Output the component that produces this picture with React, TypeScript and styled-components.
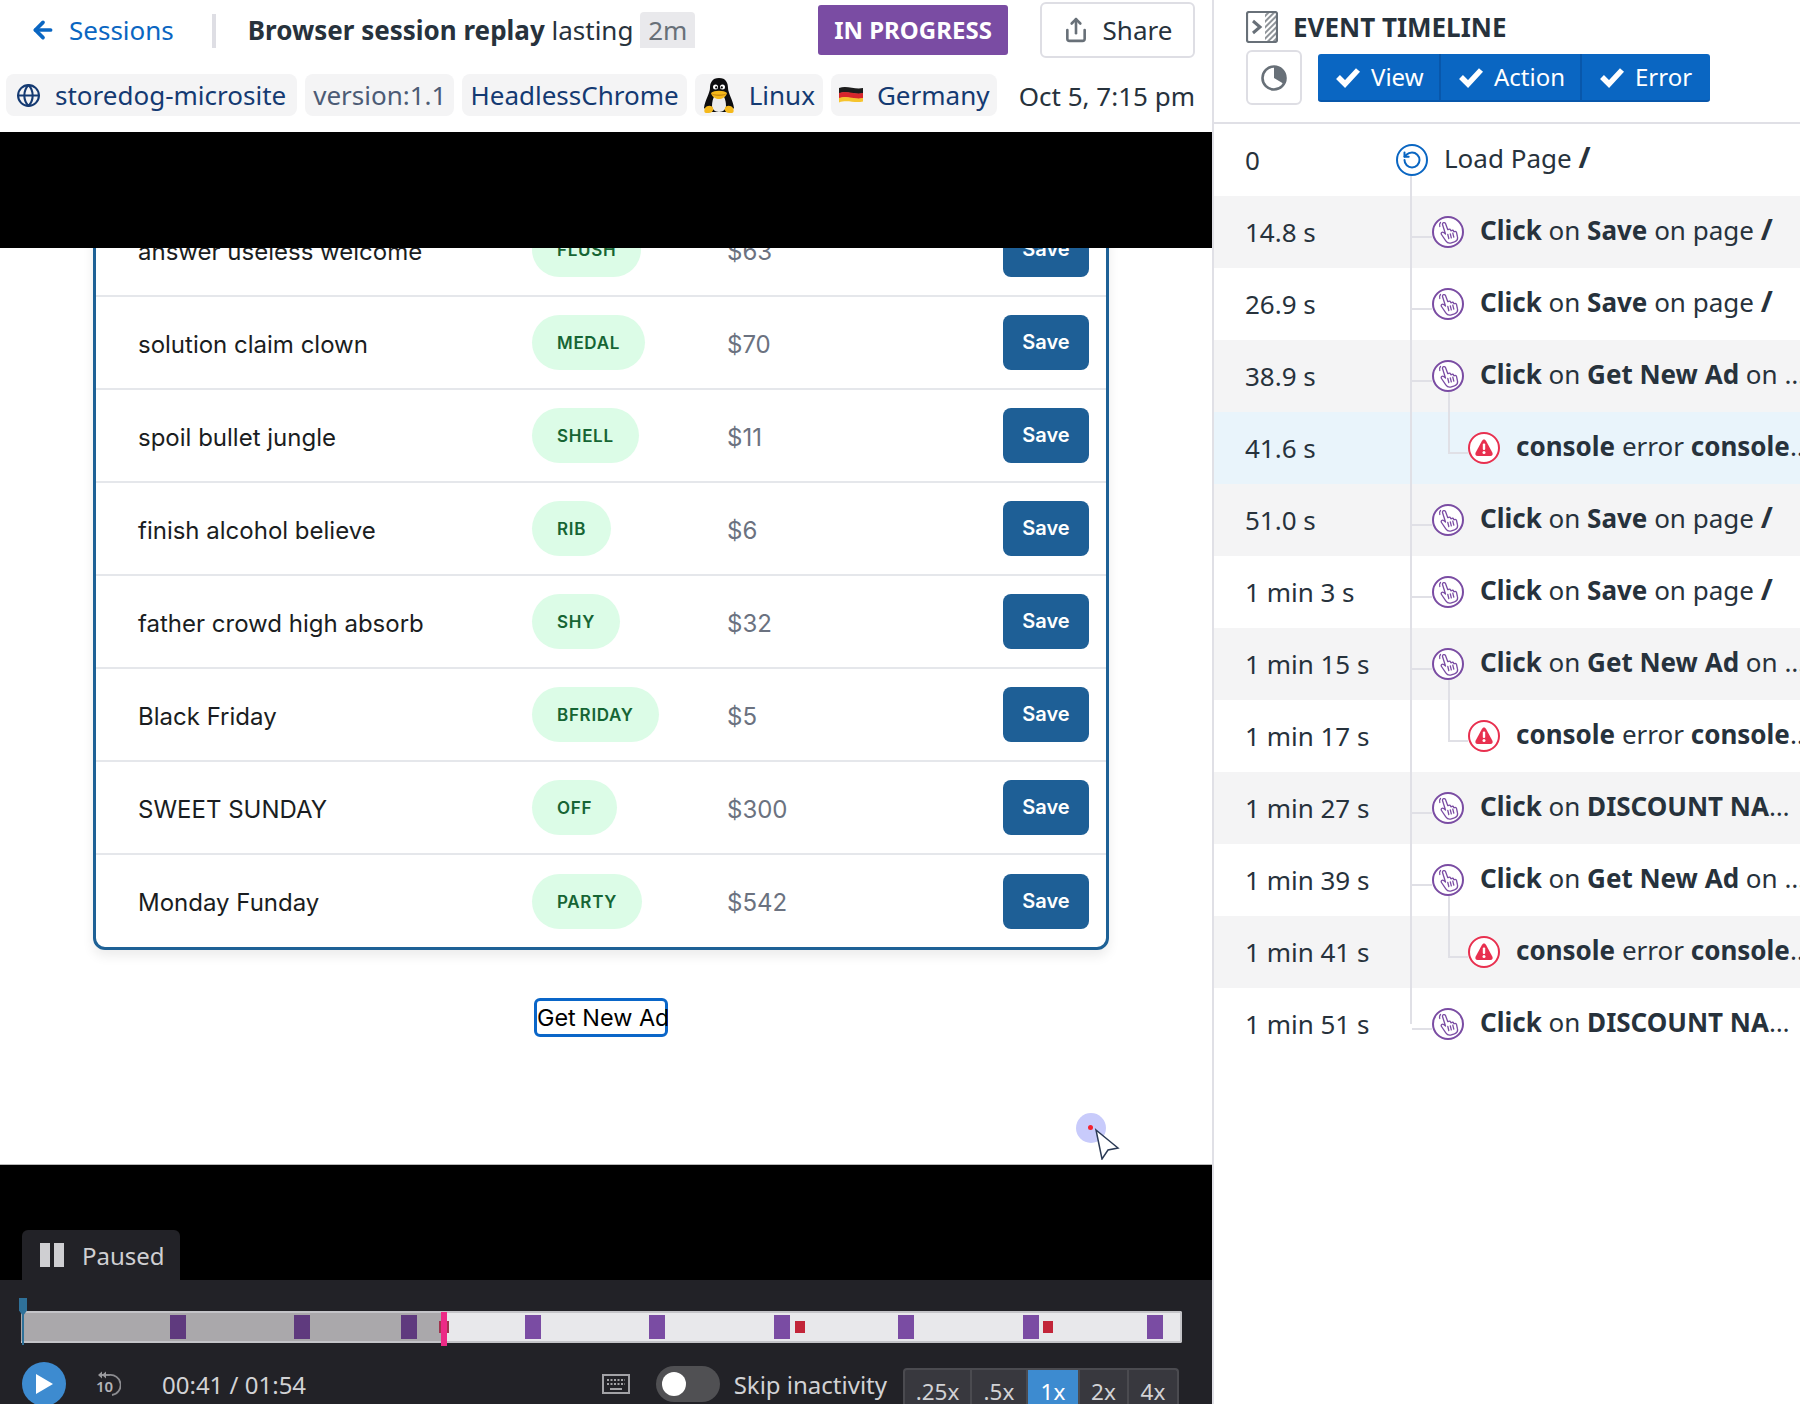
import React from "react";
import styled, { createGlobalStyle } from "styled-components";
import { ArrowLeft, Globe, RotateCcw, Share } from "lucide-react";

const GlobalStyle = createGlobalStyle`
  html, body { margin: 0; padding: 0; background: #fff; }
  * { box-sizing: border-box; }
`;

const Page = styled.div`
  display: flex;
  width: 1800px;
  height: 1404px;
  overflow: hidden;
  font-family: "Noto Sans", sans-serif;
  color: #27323c;
`;

const ReplayPanel = styled.div`
  display: flex;
  flex-direction: column;
  width: 1212px;
  flex: none;
`;

const Header = styled.header`
  height: 132px;
  flex: none;
`;

const TopRow = styled.div`
  display: flex;
  align-items: center;
  height: 60px;
  padding: 0 17px 0 30px;
`;

const BackLink = styled.a`
  display: flex;
  align-items: center;
  gap: 13px;
  font-size: 26px;
  color: #0a66c2;
`;

const TitleDivider = styled.span`
  width: 4px;
  height: 34px;
  margin: 2px 32px 0 38px;
  background: #dedee4;
`;

const Title = styled.div`
  font-size: 26px;
  white-space: nowrap;
  b { font-weight: 700; }
`;

const Duration = styled.span`
  display: inline-block;
  margin-left: 0;
  padding: 0 8px;
  line-height: 36px;
  border-radius: 4px 4px 0 0;
  background: #e9e9ec;
  color: #687078;
`;

const StatusBadge = styled.div`
  margin-left: auto;
  width: 190px;
  height: 50px;
  border-radius: 3px;
  background: #7a4ca3;
  color: #fff;
  font-size: 24px;
  font-weight: 700;
  line-height: 50px;
  text-align: center;
  white-space: nowrap;
`;

const ShareButton = styled.div`
  display: flex;
  align-items: center;
  justify-content: center;
  gap: 14px;
  width: 155px;
  height: 56px;
  margin-left: 32px;
  border: 2px solid #dedee4;
  border-radius: 6px;
  font-size: 26px;
  svg { color: #687078; }
`;

const ChipRow = styled.div`
  display: flex;
  align-items: center;
  gap: 8px;
  height: 42px;
  margin-top: 14px;
  padding: 0 17px 0 6px;
`;

const Chip = styled.div`
  display: flex;
  align-items: center;
  gap: 14px;
  height: 42px;
  padding: 0 8px;
  border-radius: 8px;
  background: #f4f4f5;
  color: #143a72;
  font-size: 26px;
  line-height: 38px;
  white-space: nowrap;
`;

const ServiceChip = styled(Chip)`
  padding: 0 11px 0 10px;
`;

const VersionChip = styled(Chip)`
  gap: 0;
  color: #4c5b75;
`;

const SessionDate = styled.div`
  margin-left: auto;
  font-size: 26px;
  padding-top: 2px;
  white-space: nowrap;
`;

const BlackBand = styled.div`
  height: 116px;
  flex: none;
  background: #000;
`;

const Viewport = styled.div`
  position: relative;
  height: 917px;
  flex: none;
  overflow: hidden;
  background: #fff;
  border-bottom: 1px solid #b9b9b9;
`;

const Card = styled.div`
  width: 1016px;
  margin: -47px 0 0 93px;
  border: 3px solid #1e6196;
  border-radius: 12px;
  box-shadow: 0 6px 12px rgba(0, 0, 0, 0.08);
`;

const CouponRow = styled.div`
  display: grid;
  grid-template-columns: 394px 195px 1fr auto;
  align-items: center;
  height: 93px;
  padding: 0 17px 0 42px;
  border-bottom: 2px solid #e5e7eb;
  font-family: Inter, sans-serif;
  &:last-child { height: 92px; border-bottom: 0; }
`;

const CouponName = styled.div`
  padding-top: 3px;
  font-size: 24px;
  color: #1a1d21;
`;

const CouponCode = styled.div`
  justify-self: start;
  height: 55px;
  padding: 0 25px;
  border-radius: 28px;
  background: #dcfce7;
  color: #166534;
  font-size: 17px;
  font-weight: 600;
  letter-spacing: 0.7px;
  line-height: 56px;
`;

const CouponPrice = styled.div`
  padding-top: 3px;
  font-size: 24px;
  color: #6b7280;
`;

const SaveButton = styled.div`
  width: 86px;
  height: 55px;
  border-radius: 8px;
  background: #1e5f96;
  color: #fff;
  font-size: 20px;
  font-weight: 600;
  line-height: 55px;
  text-align: center;
`;

const AdButton = styled.div`
  width: 134px;
  height: 39px;
  margin: 48px 0 0 534px;
  border: 3px solid #0a66c8;
  border-radius: 6px;
  color: #000;
  font-family: Inter, sans-serif;
  font-size: 23.4px;
  line-height: 33px;
  text-align: center;
  white-space: nowrap;
`;

const CursorDot = styled.div`
  position: absolute;
  left: 1076px;
  top: 865px;
  width: 30px;
  height: 30px;
  border-radius: 50%;
  background: #c8cbfb;
  &::after {
    content: "";
    position: absolute;
    left: 12px;
    top: 12px;
    width: 5px;
    height: 5px;
    border-radius: 50%;
    background: #f5212f;
  }
`;

const CursorArrow = styled.svg`
  position: absolute;
  left: 1094px;
  top: 880px;
`;

const PausedBand = styled.div`
  display: flex;
  align-items: flex-end;
  height: 115px;
  flex: none;
  padding-left: 22px;
  background: #000;
`;

const PausedTab = styled.div`
  display: flex;
  align-items: center;
  gap: 18px;
  width: 158px;
  height: 50px;
  padding-left: 18px;
  border-radius: 6px 6px 0 0;
  background: #222227;
  color: #cfcfd2;
  font-size: 24px;
`;

const PauseBars = styled.span`
  display: flex;
  gap: 4px;
  i { width: 10px; height: 24px; background: #cfcfd2; }
`;

const Controls = styled.div`
  flex: 1;
  overflow: hidden;
  padding-top: 31px;
  background: #222227;
`;

const Track = styled.div`
  position: relative;
  width: 1161px;
  height: 32px;
  margin-left: 21px;
  border: 2px solid #c4c4c8;
  border-left: 0;
  border-radius: 0 2px 2px 0;
  background: #e8e8eb;
`;

const TrackPlayed = styled.div`
  position: absolute;
  left: 0;
  top: -2px;
  bottom: -2px;
  background: #aaa8ab;
  border-top: 2px solid #c4c4c8;
  border-bottom: 2px solid #c4c4c8;
`;

const TrackMark = styled.div<{ $past: boolean }>`
  position: absolute;
  top: 2px;
  width: 16px;
  height: 24px;
  background: ${(p) => (p.$past ? "#5f3a7e" : "#7a4ca3")};
`;

const TrackError = styled.div<{ $past: boolean }>`
  position: absolute;
  top: 8px;
  width: 10px;
  height: 12px;
  background: ${(p) => (p.$past ? "#a1344e" : "#c22539")};
`;

const PlayHead = styled.div`
  position: absolute;
  left: 420px;
  top: -1px;
  width: 6px;
  height: 34px;
  background: #ec2a86;
`;

const StartMarker = styled.div`
  position: absolute;
  left: -2px;
  top: -15px;
  width: 8px;
  height: 18px;
  background: #2f7199;
  clip-path: polygon(0 0, 100% 0, 100% 70%, 50% 100%, 0 70%);
`;

const StartLine = styled.div`
  position: absolute;
  left: 1px;
  top: 0;
  width: 2px;
  height: 32px;
  background: #2f7199;
`;

const ControlRow = styled.div`
  display: flex;
  align-items: center;
  height: 44px;
  margin-top: 19px;
  padding: 0 33px 0 22px;
`;

const PlayButton = styled.div`
  display: flex;
  align-items: center;
  justify-content: center;
  width: 44px;
  height: 44px;
  border-radius: 50%;
  background: #3d8bd0;
`;

const SkipBack = styled.svg`
  margin-left: 29px;
`;

const TimeText = styled.div`
  margin-left: 41px;
  color: #d2d2d5;
  font-size: 24px;
  white-space: nowrap;
`;

const KeyboardIcon = styled.svg`
  margin-left: auto;
`;

const Toggle = styled.div`
  display: flex;
  align-items: center;
  width: 64px;
  height: 36px;
  margin-left: 26px;
  padding-left: 6px;
  border-radius: 18px;
  background: #505053;
  &::before {
    content: "";
    width: 24px;
    height: 24px;
    border-radius: 50%;
    background: #fff;
  }
`;

const SkipLabel = styled.div`
  margin-left: 14px;
  color: #d2d2d5;
  font-size: 24px;
  white-space: nowrap;
`;

const SpeedGroup = styled.div`
  display: flex;
  align-self: flex-start;
  height: 44px;
  margin: 6px 0 0 16px;
  border: 2px solid #4b4b50;
  border-bottom: 0;
  border-radius: 4px 4px 0 0;
  background: #38383e;
`;

const SpeedOption = styled.div<{ $width: number; $active?: boolean }>`
  width: ${(p) => p.$width}px;
  border-right: 2px solid #4b4b50;
  background: ${(p) => (p.$active ? "#3d8bd0" : "transparent")};
  color: ${(p) => (p.$active ? "#fff" : "#d2d2d5")};
  font-size: 22.5px;
  line-height: 44px;
  text-align: center;
  &:last-child { border-right: 0; }
`;

const TimelinePanel = styled.aside`
  flex: 1;
  min-width: 0;
  border-left: 2px solid #e0e0e6;
`;

const TimelineHeader = styled.div`
  height: 124px;
  padding: 10px 0 0 32px;
  border-bottom: 2px solid #e0e0e6;
`;

const TimelineTitleRow = styled.div`
  display: flex;
  align-items: center;
  gap: 15px;
  height: 34px;
`;

const TimelineTitle = styled.h2`
  margin: 0;
  font-size: 26px;
  font-weight: 700;
  line-height: 32px;
  white-space: nowrap;
`;

const FilterRow = styled.div`
  display: flex;
  align-items: center;
  gap: 16px;
  margin-top: 6px;
`;

const PieButton = styled.div`
  display: flex;
  align-items: center;
  justify-content: center;
  width: 56px;
  height: 55px;
  border: 2px solid #dedee4;
  border-radius: 6px;
`;

const FilterGroup = styled.div`
  display: flex;
  height: 48px;
  border-radius: 3px;
  background: #0a66c2;
  border-bottom: 2px solid #0857ab;
`;

const FilterOption = styled.div<{ $width: number }>`
  display: flex;
  align-items: center;
  gap: 10px;
  width: ${(p) => p.$width}px;
  padding-left: 17px;
  border-right: 2px solid #0857ab;
  color: #fff;
  font-size: 24px;
  &:last-child { border-right: 0; }
`;

const EventList = styled.div`
  position: relative;
  &::before {
    content: "";
    position: absolute;
    left: 196px;
    top: 50px;
    width: 2px;
    height: 850px;
    background: #e0e0e6;
    z-index: 1;
  }
`;

const EventRow = styled.div<{ $tone: "white" | "grey" | "blue" }>`
  display: flex;
  align-items: center;
  height: 72px;
  padding-left: 31px;
  background: ${(p) =>
    p.$tone === "blue" ? "#e9f4fb" : p.$tone === "grey" ? "#f4f4f5" : "#fff"};
`;

const EventTime = styled.div`
  width: 151px;
  flex: none;
  font-size: 26px;
  white-space: nowrap;
`;

const EventNode = styled.div<{ $level: number; $color: string }>`
  position: relative;
  display: flex;
  align-items: center;
  justify-content: center;
  width: 32px;
  height: 32px;
  flex: none;
  margin-left: ${(p) => p.$level * 36}px;
  border: 2px solid ${(p) => p.$color};
  border-radius: 50%;
  background: #fff;
  color: ${(p) => p.$color};
  z-index: 2;
`;

const BranchLine = styled.span`
  position: absolute;
  left: -22px;
  top: 18px;
  width: 20px;
  height: 2px;
  background: #e0e0e6;
`;

const ElbowLine = styled.span`
  position: absolute;
  left: -22px;
  top: -42px;
  width: 20px;
  height: 62px;
  border-left: 2px solid #e0e0e6;
  border-bottom: 2px solid #e0e0e6;
`;

const EventLabel = styled.div<{ $level: number }>`
  flex: none;
  width: ${(p) => 368 - p.$level * 36}px;
  margin: -4px 0 0 16px;
  font-size: 26px;
  white-space: nowrap;
  overflow: hidden;
  text-overflow: ellipsis;
  b { font-weight: 700; }
  i { font-style: normal; font-weight: 700; font-size: 29px; line-height: 1; }
`;

const coupons = [
  ["answer useless welcome", "FLUSH", "$63"],
  ["solution claim clown", "MEDAL", "$70"],
  ["spoil bullet jungle", "SHELL", "$11"],
  ["finish alcohol believe", "RIB", "$6"],
  ["father crowd high absorb", "SHY", "$32"],
  ["Black Friday", "BFRIDAY", "$5"],
  ["SWEET SUNDAY", "OFF", "$300"],
  ["Monday Funday", "PARTY", "$542"],
];

type EventItem = {
  time: string;
  tone: "white" | "grey" | "blue";
  kind: "load" | "click" | "error";
  target?: string;
};

const events: EventItem[] = [
  { time: "0", tone: "white", kind: "load" },
  { time: "14.8 s", tone: "grey", kind: "click", target: "Save" },
  { time: "26.9 s", tone: "white", kind: "click", target: "Save" },
  { time: "38.9 s", tone: "grey", kind: "click", target: "Get New Ad" },
  { time: "41.6 s", tone: "blue", kind: "error" },
  { time: "51.0 s", tone: "grey", kind: "click", target: "Save" },
  { time: "1 min 3 s", tone: "white", kind: "click", target: "Save" },
  { time: "1 min 15 s", tone: "grey", kind: "click", target: "Get New Ad" },
  { time: "1 min 17 s", tone: "white", kind: "error" },
  { time: "1 min 27 s", tone: "grey", kind: "click", target: "DISCOUNT NAME" },
  { time: "1 min 39 s", tone: "white", kind: "click", target: "Get New Ad" },
  { time: "1 min 41 s", tone: "grey", kind: "error" },
  { time: "1 min 51 s", tone: "white", kind: "click", target: "DISCOUNT NAME" },
];

const marks = [170, 294, 401, 525, 649, 774, 898, 1023, 1147];
const errorMarks = [439, 795, 1043];
const TRACK_LEFT = 21;
const PLAYED = 441;

function PenguinIcon() {
  return (
    <svg width="32" height="36" viewBox="0 0 32 36">
      <path d="M16 1C9 1 7 6 7 11c0 5-5 12-6 20 2 2 5 4 8 4h14c3 0 6-2 8-4-1-8-6-15-6-20 0-5-2-10-9-10z" fill="#0d0d0f" />
      <path d="M16 15c-4 1-7 7-7 14 0 3 3 6 7 6s7-3 7-6c0-7-3-13-7-14z" fill="#ececec" />
      <circle cx="12.500" cy="10" r="2.500" fill="#fff" />
      <circle cx="19.500" cy="10" r="2.500" fill="#fff" />
      <circle cx="13.200" cy="10.400" r="1.100" fill="#000" />
      <circle cx="18.800" cy="10.400" r="1.100" fill="#000" />
      <path d="M8 16c3-3 13-3 16 0-1 4-5 6-8 6s-7-2-8-6z" fill="#f5b91c" />
      <path d="M8 16c3 2 13 2 16 0-1 2-4 3-8 3s-7-1-8-3z" fill="#c98a10" />
      <path d="M2 31c2-3 7-3 8 0 1 2-1 5-4 5H3c-2 0-2-3-1-5zM30 31c-2-3-7-3-8 0-1 2 1 5 4 5h3c2 0 2-3 1-5z" fill="#f5b91c" />
    </svg>
  );
}

function FlagIcon() {
  return (
    <svg width="24" height="18" viewBox="0 0 24 18">
      <path d="M0 2c8-3 16 2 24 0v5.500c-8 2-16-3-24 0z" fill="#1c1c1c" />
      <path d="M0 7c8-3 16 2 24 0v5.500c-8 2-16-3-24 0z" fill="#d8262c" />
      <path d="M0 12c8-3 16 2 24 0v3.500c-8 2-16-2-24 1z" fill="#f6c42d" />
    </svg>
  );
}

function CheckIcon() {
  return (
    <svg width="26" height="22" viewBox="0 0 26 22">
      <path d="M3 11l7 7L23 4" fill="none" stroke="#fff" strokeWidth="5.500" />
    </svg>
  );
}

function HandIcon() {
  return (
    <svg width="24" height="24" viewBox="0 0 24 24" fill="none" stroke="currentColor" strokeWidth="1.300" strokeLinejoin="round" strokeLinecap="round">
      <path d="M6.500 4.500a1.600 1.600 0 0 1 3-1l2.300 6.200 1-.4a1.400 1.400 0 0 1 1.800.8l.3.700 1-.4a1.400 1.400 0 0 1 1.800.8l.2.600.8-.3a1.400 1.400 0 0 1 1.800.9l.9 4.100c.7 2.800-.6 4.600-3 5.400l-3 .9c-2.400.7-4.300-.1-5.600-2l-4.300-6.300a1.500 1.500 0 0 1 2.200-2l1.800 1.500z" />
      <path d="M11.800 14.500l1 4M14.300 13.800l1 4M16.800 13.100l1 4" />
      <path d="M3.800 6.500a4 4 0 0 1 .7-4" />
    </svg>
  );
}

function ErrorIcon() {
  return (
    <svg width="22" height="22" viewBox="0 0 22 22">
      <path d="M11 2.500c1 0 1.600.6 2.100 1.500l6.200 11.500c1 1.900 0 3.500-2 3.500H4.700c-2 0-3-1.600-2-3.500L8.900 4c.5-.9 1.100-1.500 2.100-1.500z" fill="#e8304f" />
      <rect x="9.800" y="6.500" width="2.400" height="6.500" rx="1" fill="#fff" />
      <circle cx="11" cy="15.500" r="1.500" fill="#fff" />
    </svg>
  );
}

function EventText({ item }: { item: EventItem }) {
  if (item.kind === "load") {
    return (
      <>
        Load Page <i>/</i>
      </>
    );
  }
  if (item.kind === "error") {
    return (
      <>
        <b>console</b> error <b>console.error: something failed</b>
      </>
    );
  }
  return (
    <>
      <b>Click</b> on <b>{item.target}</b> on page <i>/</i>
    </>
  );
}

function App(): React.ReactElement {
  return (
    <Page>
      <GlobalStyle />
      <ReplayPanel>
        <Header>
          <TopRow>
            <BackLink>
              <ArrowLeft size={26} strokeWidth={3.4} />
              Sessions
            </BackLink>
            <TitleDivider />
            <Title>
              <b>Browser session replay</b> lasting <Duration>2m</Duration>
            </Title>
            <StatusBadge>IN PROGRESS</StatusBadge>
            <ShareButton>
              <Share size={26} strokeWidth={2.4} />
              Share
            </ShareButton>
          </TopRow>
          <ChipRow>
            <ServiceChip>
              <Globe size={25} />
              storedog-microsite
            </ServiceChip>
            <VersionChip>version:1.1</VersionChip>
            <Chip>HeadlessChrome</Chip>
            <Chip>
              <PenguinIcon />
              Linux
            </Chip>
            <Chip>
              <FlagIcon />
              Germany
            </Chip>
            <SessionDate>Oct 5, 7:15 pm</SessionDate>
          </ChipRow>
        </Header>
        <BlackBand />
        <Viewport>
          <Card>
            {coupons.map(([name, code, price]) => (
              <CouponRow key={code}>
                <CouponName>{name}</CouponName>
                <CouponCode>{code}</CouponCode>
                <CouponPrice>{price}</CouponPrice>
                <SaveButton>Save</SaveButton>
              </CouponRow>
            ))}
          </Card>
          <AdButton>Get New Ad</AdButton>
          <CursorDot />
          <CursorArrow width="26" height="32" viewBox="0 0 26 32">
            <path d="M2 2l22 18-10 2-6 9z" fill="#fff" stroke="#2b3a55" strokeWidth="1.500" />
          </CursorArrow>
        </Viewport>
        <PausedBand>
          <PausedTab>
            <PauseBars>
              <i />
              <i />
            </PauseBars>
            Paused
          </PausedTab>
        </PausedBand>
        <Controls>
          <Track>
            <TrackPlayed style={{ width: PLAYED - TRACK_LEFT }} />
            {marks.map((x) => (
              <TrackMark key={x} $past={x < PLAYED} style={{ left: x - TRACK_LEFT }} />
            ))}
            {errorMarks.map((x) => (
              <TrackError key={x} $past={x < PLAYED} style={{ left: x - TRACK_LEFT }} />
            ))}
            <PlayHead />
            <StartMarker />
            <StartLine />
          </Track>
          <ControlRow>
            <PlayButton>
              <svg width="22" height="24" viewBox="0 0 22 24">
                <path d="M3 2l17 10L3 22z" fill="#fff" />
              </svg>
            </PlayButton>
            <SkipBack width="26" height="28" viewBox="0 0 26 28">
              <path d="M7 5h7a10 10 0 0 1 3 20" fill="none" stroke="#8c8c90" strokeWidth="1.800" />
              <path d="M7 1.500L3 5l4 3.500zM11 1.500L7 5l4 3.500z" fill="#9a9a9e" />
              <text x="1" y="22" fill="#b4b4b8" fontSize="15" fontWeight="600" fontFamily="Noto Sans, sans-serif">10</text>
            </SkipBack>
            <TimeText>00:41 / 01:54</TimeText>
            <KeyboardIcon width="28" height="20" viewBox="0 0 28 20">
              <rect x="1" y="1" width="26" height="18" fill="none" stroke="#a2a2a6" strokeWidth="2" />
              <path d="M5 6h18M5 10h18" stroke="#a2a2a6" strokeWidth="2" strokeDasharray="2 1.500" />
              <path d="M8 15h12" stroke="#a2a2a6" strokeWidth="2" />
            </KeyboardIcon>
            <Toggle />
            <SkipLabel>Skip inactivity</SkipLabel>
            <SpeedGroup>
              <SpeedOption $width={67}>.25x</SpeedOption>
              <SpeedOption $width={56}>.5x</SpeedOption>
              <SpeedOption $width={52} $active>1x</SpeedOption>
              <SpeedOption $width={49}>2x</SpeedOption>
              <SpeedOption $width={48}>4x</SpeedOption>
            </SpeedGroup>
          </ControlRow>
        </Controls>
      </ReplayPanel>
      <TimelinePanel>
        <TimelineHeader>
          <TimelineTitleRow>
            <svg width="32" height="32" viewBox="0 0 32 32">
              <defs>
                <pattern id="hatch" width="4" height="4" patternUnits="userSpaceOnUse" patternTransform="rotate(45)">
                  <rect width="2" height="4" fill="#8f9499" />
                </pattern>
              </defs>
              <rect x="19" y="1" width="12" height="30" fill="url(#hatch)" />
              <rect x="1" y="1" width="30" height="30" rx="2" fill="none" stroke="#687078" strokeWidth="2.200" />
              <path d="M7 10l7 6-7 6" fill="none" stroke="#687078" strokeWidth="3" />
            </svg>
            <TimelineTitle>EVENT TIMELINE</TimelineTitle>
          </TimelineTitleRow>
          <FilterRow>
            <PieButton>
              <svg width="28" height="28" viewBox="0 0 28 28">
                <circle cx="14" cy="14" r="11.500" fill="none" stroke="#687078" strokeWidth="2.600" />
                <path d="M14 14V2.500A11.500 11.500 0 0 1 24 20z" fill="#687078" />
              </svg>
            </PieButton>
            <FilterGroup>
              <FilterOption $width={123}>
                <CheckIcon />
                View
              </FilterOption>
              <FilterOption $width={141}>
                <CheckIcon />
                Action
              </FilterOption>
              <FilterOption $width={128}>
                <CheckIcon />
                Error
              </FilterOption>
            </FilterGroup>
          </FilterRow>
        </TimelineHeader>
        <EventList>
          {events.map((item) => {
            const level = item.kind === "load" ? 0 : item.kind === "click" ? 1 : 2;
            const color =
              item.kind === "load" ? "#0a66c2" : item.kind === "click" ? "#7a4ca3" : "#e8304f";
            return (
              <EventRow key={item.time} $tone={item.tone}>
                <EventTime>{item.time}</EventTime>
                <EventNode $level={level} $color={color}>
                  {level === 1 && <BranchLine />}
                  {level === 2 && <ElbowLine />}
                  {item.kind === "load" && <RotateCcw size={20} strokeWidth={2.4} />}
                  {item.kind === "click" && <HandIcon />}
                  {item.kind === "error" && <ErrorIcon />}
                </EventNode>
                <EventLabel $level={level}>
                  <EventText item={item} />
                </EventLabel>
              </EventRow>
            );
          })}
        </EventList>
      </TimelinePanel>
    </Page>
  );
}

export default App;
